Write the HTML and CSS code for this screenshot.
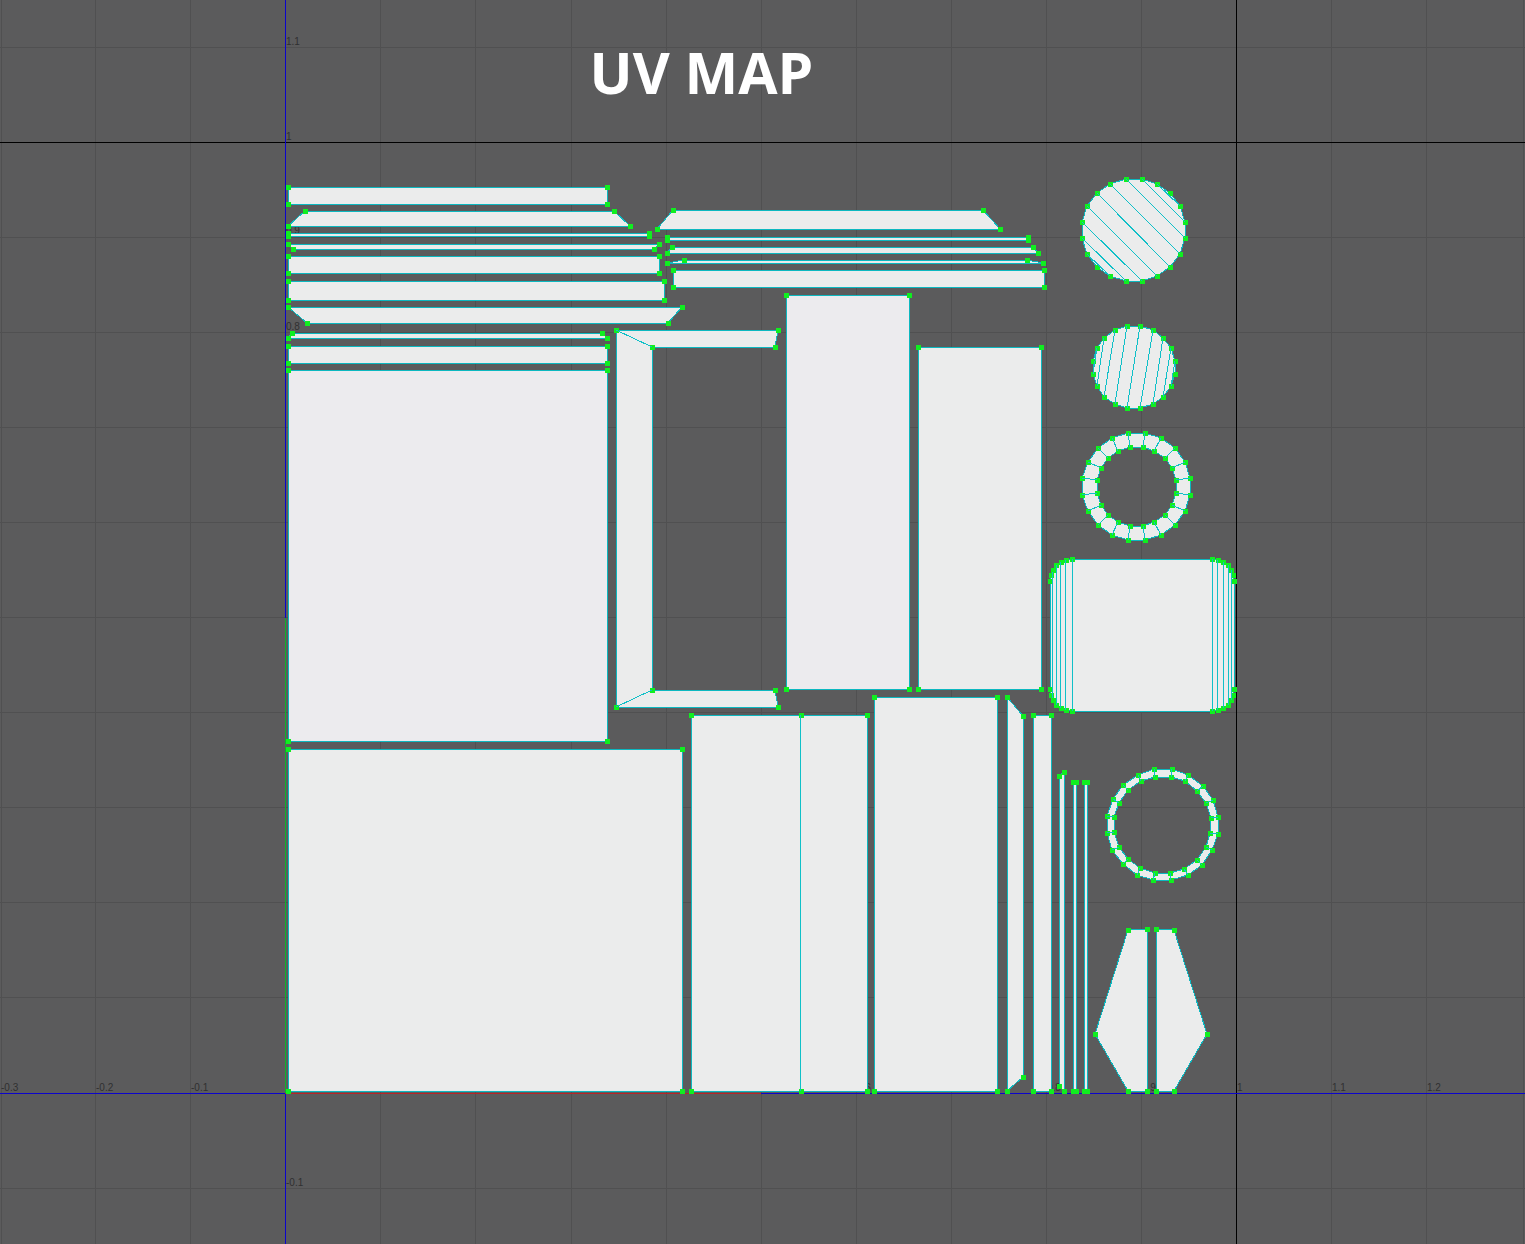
FILE: index.html
```html
<!DOCTYPE html>
<html lang="en">
<head>
<meta charset="utf-8">
<meta name="viewport" content="width=device-width, initial-scale=1">
<title>UV Map</title>
<link rel="stylesheet" href="styles.css">
</head>
<body>
<main class="viewer">
  <h1 class="title">UV MAP</h1>
  <svg class="canvas" viewBox="0 0 1525 1244" role="img" aria-label="UV layout of the mesh shells">
    <defs>
      <marker id="vertex" class="vertex" markerUnits="userSpaceOnUse" markerWidth="5" markerHeight="5" refX="2" refY="2">
        <rect width="5" height="5"/>
      </marker>
    </defs>

    <!-- Grid, one line for each 0.1 of UV space -->
    <path class="grid" d="M1 0V1244M95 0V1244M190 0V1244M380 0V1244M475 0V1244M571 0V1244M666 0V1244M761 0V1244M856 0V1244M951 0V1244M1046 0V1244M1141 0V1244M1331 0V1244M1426 0V1244M1523 0V1244M0 47H1525M0 237H1525M0 332H1525M0 427H1525M0 522H1525M0 617H1525M0 712H1525M0 807H1525M0 902H1525M0 997H1525M0 1188H1525"/>
    <path class="bounds" d="M0 142H1525M1236 0V1244"/>
    <path class="axis" d="M285 0V1244M0 1093H1525"/>
    <path class="axis-u" d="M285 1093H761"/>
    <path class="axis-v" d="M285 618V1093"/>

    <g class="labels">
      <text x="286" y="45">1.1</text>
      <text x="286" y="140">1</text>
      <text x="286" y="234">0.9</text>
      <text x="286" y="330">0.8</text>
      <text x="286" y="1186">-0.1</text>
      <text x="1" y="1091">-0.3</text>
      <text x="96" y="1091">-0.2</text>
      <text x="191" y="1091">-0.1</text>
      <text x="857" y="1091">0.6</text>
      <text x="1047" y="1091">0.8</text>
      <text x="1142" y="1091">0.9</text>
      <text x="1237" y="1091">1</text>
      <text x="1332" y="1091">1.1</text>
      <text x="1427" y="1091">1.2</text>
    </g>

    <!-- Left strips -->
    <g class="shell">
      <path d="M288 187H607V204H288Z"/>
      <path d="M305 211H614L630 226H288Z"/>
      <path d="M288 233H649V236H288Z"/>
      <path d="M288 244H659L654 249H293Z"/>
      <path d="M288 256H659V273H288Z"/>
      <path d="M288 281H664V300H288Z"/>
      <path d="M288 307H682L668 323H307Z"/>
      <path d="M292 333H602L607 338H288Z"/>
      <path d="M288 346H607V363H288Z"/>
    </g>

    <!-- Right strips -->
    <g class="shell">
      <path d="M673 210H983L1000 229H657Z"/>
      <path d="M667 237H1028V240H667Z"/>
      <path d="M672 247H1033L1038 253H667Z"/>
      <path d="M667 263L684 260H1027L1043 263Z"/>
      <path d="M673 270H1044V287H673Z"/>
    </g>

    <!-- Panels -->
    <g class="shell">
      <path class="tinted" d="M288 370H607V741H288Z"/>
      <path d="M288 749H682V1091H288Z"/>
      <path d="M616 330H778L775 347H652V690H775L778 707H616Z"/>
      <path class="tinted" d="M786 295H909V689H786Z"/>
      <path d="M918 347H1041V689H918Z"/>
      <path d="M691 715H801H867V1091H801H691Z"/>
      <path d="M874 697H997V1091H874Z"/>
      <path d="M1007 697L1023 716V1077L1007 1091Z"/>
      <path d="M1033 715H1051V1091H1033Z"/>
      <path d="M1059 776L1064 772V1091L1059 1086Z"/>
      <path d="M1073 782H1076V1091H1073Z"/>
      <path d="M1084 782H1087V1091H1084Z"/>
      <path d="M1128 930L1147 929V1091H1128L1095 1034Z"/>
      <path d="M1156 929L1174 930L1207 1034L1174 1091H1156Z"/>
    </g>
    <path class="seam" d="M616 330L652 347M616 707L652 690M800 715V1091"/>

    <!-- Discs -->
    <g class="shell">
      <path d="M1142 179L1157 184L1170 193L1180 206L1185 222V238L1180 254L1170 267L1157 276L1142 281H1126L1110 276L1097 267L1087 254L1082 238V222L1087 206L1097 193L1110 184L1126 179Z"/>
      <path d="M1140 326L1153 330L1163 338L1171 348L1175 361V374L1171 386L1163 397L1153 404L1140 408H1127L1115 404L1104 397L1097 386L1093 374V361L1097 348L1104 338L1115 330L1127 326Z"/>
    </g>
    <path class="seam" d="M1157 184L1180 206M1142 179L1185 222M1126 179L1185 238M1110 184L1180 254M1097 193L1170 267M1087 206L1157 276M1082 222L1142 281M1082 238L1126 281M1087 254L1110 276"/>
    <path class="seam" d="M1097 348L1093 374M1104 338L1097 386M1115 330L1104 397M1127 326L1115 404M1140 326L1127 408M1153 330L1140 408M1163 338L1153 404M1171 348L1163 397M1175 361L1171 386"/>

    <!-- Wide ring -->
    <g class="shell">
      <path d="M1128 433H1145L1161 438L1175 448L1185 462L1190 478V495L1185 511L1175 525L1161 535L1145 540H1128L1112 535L1098 525L1088 511L1082 495V478L1088 462L1098 448L1112 438Z M1130 447H1143L1154 451L1165 458L1172 468L1176 480V493L1172 505L1165 515L1154 522L1143 526H1130L1118 522L1108 515L1101 505L1097 493V480L1101 468L1108 458L1118 451Z"/>
    </g>
    <path class="seam" d="M1128 433L1130 447M1145 433L1143 447M1161 438L1154 451M1175 448L1165 458M1185 462L1172 468M1190 478L1176 480M1190 495L1176 493M1185 511L1172 505M1175 525L1165 515M1161 535L1154 522M1145 540L1143 526M1128 540L1130 526M1112 535L1118 522M1098 525L1108 515M1088 511L1101 505M1082 495L1097 493M1082 478L1097 480M1088 462L1101 468M1098 448L1108 458M1112 438L1118 451"/>

    <!-- Thin ring -->
    <g class="shell">
      <path d="M1154 769H1172L1188 775L1203 786L1213 800L1218 817V834L1212 850L1202 865L1188 875L1171 880H1153L1137 875L1123 864L1112 850L1107 833V816L1113 799L1123 785L1138 775Z M1155 777H1171L1185 781L1197 791L1206 803L1211 818L1210 833L1206 847L1197 860L1184 869L1170 873H1155L1140 868L1128 859L1119 847L1114 832V817L1119 803L1128 790L1141 781Z"/>
    </g>
    <path class="seam" d="M1154 769L1155 777M1172 769L1171 777M1188 775L1185 781M1203 786L1197 791M1213 800L1206 803M1218 817L1211 818M1218 834L1210 833M1212 850L1206 847M1202 865L1197 860M1188 875L1184 869M1171 880L1170 873M1153 880L1155 873M1137 875L1140 868M1123 864L1128 859M1112 850L1119 847M1107 833L1114 832M1107 816L1114 817M1113 799L1119 803M1123 785L1128 790M1138 775L1141 781"/>

    <!-- Rounded band -->
    <g class="shell">
      <path d="M1072 559H1212L1218 560L1223 562L1228 565L1231 570L1233 575L1234 581V689L1233 695L1231 700L1228 705L1223 708L1218 710L1212 711H1072L1066 710L1061 708L1056 705L1053 700L1051 695L1050 689V581L1051 575L1053 570L1056 565L1061 562L1066 560Z"/>
    </g>
    <path class="seam" d="M1052 572V698M1056 565V705M1060 562V708M1065 560V710M1072 559V711M1212 559V711M1217 560V710M1223 562V708M1228 565V705M1231 570V700"/>
  </svg>
</main>
</body>
</html>
```
FILE: styles.css
```css
body {
  margin: 0;
  background: #5b5b5c;
  font-family: "Liberation Sans", Arial, sans-serif;
}

.viewer {
  position: relative;
}

.canvas {
  display: block;
  width: 100%;
  height: auto;
  shape-rendering: crispEdges;
}

.title {
  position: absolute;
  top: 38px;
  left: 46%;
  transform: translateX(-50%);
  margin: 0;
  color: #fff;
  font: 700 57px/68px "Open Sans", "Noto Sans", sans-serif;
  white-space: nowrap;
}

.grid,
.bounds,
.axis,
.axis-u,
.axis-v,
.seam {
  fill: none;
  stroke-width: 1px;
}

.grid {
  stroke: #505051;
}

.bounds {
  stroke: #000;
}

.axis {
  stroke: #0c04cc;
}

.axis-u {
  stroke: #b82426;
}

.axis-v {
  stroke: #0cb42a;
}

.labels {
  fill: #303031;
  font-size: 10px;
}

.shell path {
  fill: #ebecec;
  fill-rule: evenodd;
  stroke: #0cb8c0;
  stroke-width: 1px;
  marker: url(#vertex);
}

.shell .tinted {
  fill: #ecebee;
}

.seam {
  stroke: #10c0c8;
}

.vertex {
  fill: #10ee20;
}
```
